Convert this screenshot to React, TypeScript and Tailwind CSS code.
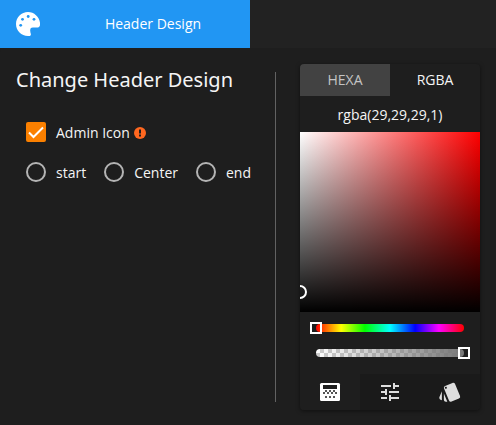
import { useState } from "react";
import { MdTune, MdStyle } from "react-icons/md";

function PaletteIcon() {
  return (
    <svg viewBox="0 0 24 24" className="size-6" aria-hidden="true">
      <path
        fill="#fff"
        d="M12 0C5.400 0 0 5.400 0 12s5.400 12 12 12h1.200c1.400 0 1.900-1 1.600-2.200-.3-1.200-.7-2.300-.6-3.700.1-1.700 1-2.500 2.600-2.500h4.200c1.900 0 3.100-1.400 3.100-3.400C24 5.500 18.600 0 12 0z"
      />
      <g fill="#2196f3">
        <circle cx="4.700" cy="13.300" r="1.400" />
        <circle cx="6.500" cy="7.300" r="1.400" />
        <circle cx="12.200" cy="4.500" r="1.400" />
        <circle cx="18" cy="7.300" r="1.400" />
      </g>
    </svg>
  );
}

function SpectrumIcon() {
  return (
    <svg viewBox="0 0 24 24" className="size-6" aria-hidden="true">
      <rect x="2" y="3" width="20" height="18" rx="1.500" fill="#fff" />
      <path fill="#1e1e1e" d="M5 5h14v4H5z" />
      <path
        fill="#555"
        d="M7 10h2v2H7zM11 10h2v2h-2zM15 10h2v2h-2zM5 12h2v2H5zM9 12h2v2H9zM13 12h2v2h-2zM17 12h2v2h-2zM7 16h2v2H7zM11 16h2v2h-2zM15 16h2v2h-2z"
      />
    </svg>
  );
}

const positions = ["start", "Center", "end"];

function DesignForm() {
  const [checked, setChecked] = useState(true);
  return (
    <section className="min-w-0 flex-1 whitespace-nowrap">
      <h1 className="font-['Noto_Sans','Open_Sans',sans-serif] text-xl leading-8">Change Header Design</h1>
      <div className="ml-2.5 mt-6 text-sm leading-6">
        <label className="flex h-6 items-center gap-2.5">
          <span className="grid size-5">
            <input
              type="checkbox"
              checked={checked}
              onChange={(e) => setChecked(e.target.checked)}
              className="col-start-1 row-start-1 size-5 appearance-none rounded-[2px] border-2 border-gray-400 checked:border-[#fb8000] checked:bg-[#fb8000]"
            />
            {checked && (
              <svg viewBox="0 0 20 20" className="pointer-events-none col-start-1 row-start-1 size-5" aria-hidden="true">
                <path d="M3 10.500l4.500 4.500L17 5.500" fill="none" stroke="#fff" strokeWidth="2" />
              </svg>
            )}
          </span>
          <span className="flex items-center gap-1 pt-0.5">
            Admin Icon
            <svg viewBox="0 0 12 12" className="size-3" aria-hidden="true">
              <circle cx="6" cy="6" r="6" fill="#ff671f" />
              <path d="M5 2.500h2v4H5zM5 7.500h2v2H5z" fill="#1e1e1e" />
            </svg>
          </span>
        </label>
        <div className="mt-4 flex gap-[18px]">
          {positions.map((p) => (
            <label key={p} className="flex h-6 items-center gap-2.5">
              <input
                type="radio"
                name="position"
                value={p}
                className="size-5 appearance-none rounded-full border-2 border-[#b4b4b4] checked:border-[6px] checked:border-[#fb8000]"
              />
              <span className="pt-0.5">{p}</span>
            </label>
          ))}
        </div>
      </div>
    </section>
  );
}

const sliderInput =
  "col-start-1 row-start-1 h-3 w-full cursor-pointer appearance-none bg-transparent opacity-0";

function ColorPicker() {
  return (
    <section className="w-[180px] shrink-0 self-start overflow-hidden rounded bg-[#1e1e1e] text-sm shadow-[0_1px_4px_rgba(0,0,0,0.5)]">
      <div className="grid h-8 grid-cols-2">
        <button type="button" className="bg-[#424242] text-[#c4c4c4]">HEXA</button>
        <button type="button" className="text-[#f5f5f5]">RGBA</button>
      </div>
      <input
        aria-label="Colour value"
        defaultValue="rgba(29,29,29,1)"
        className="block h-9 w-full bg-transparent text-center outline-none"
      />
      <div className="relative h-[180px] overflow-hidden bg-[linear-gradient(to_top,#000,transparent),linear-gradient(to_right,#fff,#f00)]">
        <span className="absolute bottom-[13px] -left-[7px] size-3.5 rounded-full border-2 border-white" />
      </div>
      <div className="flex flex-col gap-[13px] px-4 pt-2.5">
        <div className="relative flex h-3 items-center">
          <div className="grid w-full">
            <span className="col-start-1 row-start-1 h-2 self-center rounded-full bg-[linear-gradient(to_right,#f00,#ff0_17%,#0f0_33%,#0ff_50%,#00f_67%,#f0f_83%,#f00)]" />
            <input aria-label="Hue" type="range" min="0" max="360" defaultValue="0" className={sliderInput} />
          </div>
          <span className="pointer-events-none absolute -left-1.5 size-3 border-2 border-white" />
        </div>
        <div className="relative flex h-3 items-center">
          <div className="grid w-full">
            <span className="col-start-1 row-start-1 h-2 self-center rounded-full bg-white bg-[linear-gradient(to_right,transparent,#777),conic-gradient(#ccc_25%,#fff_0_50%,#ccc_0_75%,#fff_0)] bg-[size:100%_100%,8px_8px]" />
            <input aria-label="Alpha" type="range" min="0" max="100" defaultValue="100" className={sliderInput} />
          </div>
          <span className="pointer-events-none absolute -right-1.5 size-3 border-2 border-white" />
        </div>
      </div>
      <div className="mt-[15px] grid h-9 grid-cols-3 bg-[#1a1a1a] text-2xl text-[#dedede]">
        <button type="button" aria-label="Spectrum" className="grid place-items-center bg-[#1e1e1e]"><SpectrumIcon /></button>
        <button type="button" aria-label="Sliders" className="grid place-items-center"><MdTune /></button>
        <button type="button" aria-label="Swatches" className="grid place-items-center"><MdStyle /></button>
      </div>
    </section>
  );
}

export default function App() {
  return (
    <div className="min-h-screen bg-[#1e1e1e] font-['Open_Sans','Noto_Sans',sans-serif] text-[#f5f5f5]">
      <header className="flex h-12 bg-[#222]">
        <button type="button" className="flex w-[250px] items-center bg-[#2196f3] px-4 text-sm text-white">
          <PaletteIcon />
          <span className="flex-1 pl-8 text-center">Header Design</span>
        </button>
      </header>
      <main className="flex rounded-t bg-[#1e1e1e] px-4 pb-2 pt-4">
        <DesignForm />
        <div className="mr-6 mt-2 h-[330px] w-px shrink-0 bg-[#626262]" />
        <ColorPicker />
      </main>
    </div>
  );
}
